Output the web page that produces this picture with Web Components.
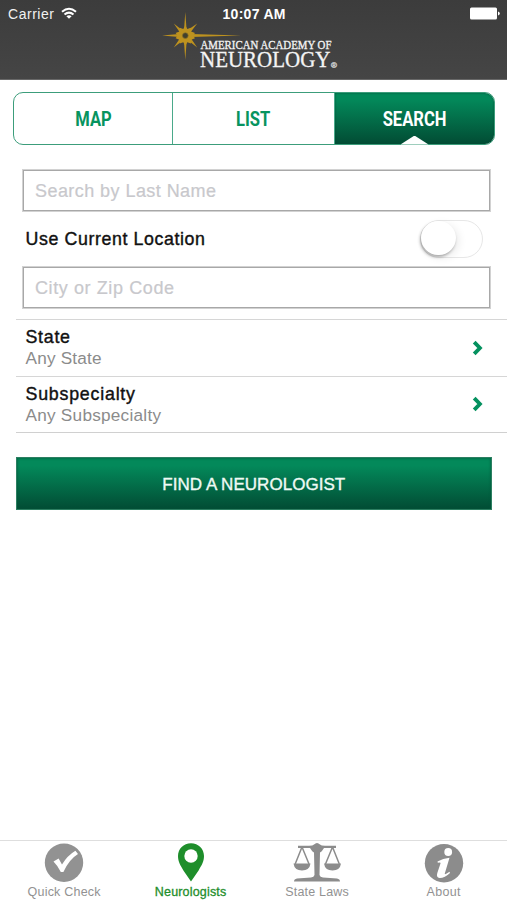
<!DOCTYPE html>
<html lang="en">
<head>
<meta charset="utf-8">
<title>Find a Neurologist</title>
<style>
html,body{margin:0;height:100%;background:#fff}
body{font-family:"Liberation Sans",Arial,sans-serif;overflow:hidden}
</style>
</head>
<body>
<neuro-app></neuro-app>
<script>
function define(name, html, setup) {
  const template = document.createElement('template');
  template.innerHTML = html;
  customElements.define(name, class extends HTMLElement {
    connectedCallback() {
      if (this.shadowRoot) return;
      this.attachShadow({mode: 'open'}).append(template.content.cloneNode(true));
      if (setup) setup(this, this.shadowRoot);
    }
  });
}

// A single line of text tracked out to the width given in its "w" attribute.
define('tracked-text', `<style>
:host{display:inline-block;white-space:nowrap}
span{display:inline-block}
</style><span></span>`, (el, root) => {
  const span = root.querySelector('span');
  const text = el.getAttribute('text');
  span.textContent = text;
  const natural = span.getBoundingClientRect().width;
  const gap = (Number(el.getAttribute('w')) - natural) / (text.length - 1);
  span.style.letterSpacing = gap + 'px';
  span.style.marginRight = -gap + 'px';
});

define('status-bar', `<style>
:host{display:grid;grid-template-columns:1fr auto 1fr;align-items:center;height:28px;padding:0 7px 0 8px;color:#f1f1f1;font-size:14px;line-height:28px}
.l{display:flex;align-items:center;gap:7px}
.r{display:flex;justify-content:flex-end;margin-top:-1px}
.l svg{margin-top:-2px}
.t{font-weight:bold;color:#fff}
svg{display:block}
</style>
<div class="l"><tracked-text text="Carrier" w="46"></tracked-text>
<svg width="16" height="13" viewBox="0 0 16 13" fill="none" stroke="#fff" stroke-width="2"><path d="M1 4.8Q8-1.4 15 4.8M3.5 7.6Q8 3.7 12.5 7.6"/><path d="M8 11.8L5.4 9.3Q8 7.2 10.6 9.3Z" fill="#fff" stroke="none"/></svg></div>
<tracked-text class="t" text="10:07 AM" w="63"></tracked-text>
<div class="r"><svg width="30" height="13" viewBox="0 0 30 13" fill="#fff"><rect x="0" y=".5" width="27" height="12" rx="1.5"/><path d="M28 4.6q1.8.3 1.8 1.9t-1.8 1.9z"/></svg></div>`);

define('academy-logo', `<style>
:host{display:block;width:180px;height:60px}
svg{display:block}
</style>
<svg width="180" height="60" viewBox="160 10 180 60">
<g fill="#bd921f">
<path d="M185.3 12l1.3 18h-2.6zM185.3 60l1.3-18h-2.6zM162 35.5l17-1.4v2.8zM241 35.5l-50-1.4v2.8z"/>
<path d="M173.8 23.4l9.4 7.6-2.6 2.6zM197.2 23.4l-7.6 10-3-2.6zM173.8 47.6l9.6-7.6-2.8-2.7zM197.2 47.6l-9.6-7.6 2.6-2.7z"/>
<path d="M185.3 25.5l2 3.5 3.6-1.2.2 3.6 3.9 1.6-2 2.6 2 2.7-3.8 1.5-.3 3.7-3.6-1.3-2 3.5-2-3.5-3.6 1.3-.3-3.7-3.8-1.5 2-2.7-2-2.6 3.9-1.6.2-3.6 3.6 1.2z"/>
</g>
<circle cx="185.3" cy="35.6" r="2.9" fill="#42402c" stroke="#8e7428" stroke-width=".7"/>
<g fill="#f4f4f4" stroke="#f4f4f4" font-family="Liberation Serif,serif">
<text x="200.5" y="48.8" font-size="11.5" stroke-width=".3" textLength="131" lengthAdjust="spacingAndGlyphs">AMERICAN ACADEMY OF</text>
<text x="200" y="66.5" font-size="22.5" stroke-width=".3" textLength="130.5" lengthAdjust="spacingAndGlyphs">NEUROLOGY</text>
</g>
<text x="331" y="67.6" font-size="8" fill="#ddd" stroke="#ccc" stroke-width=".4" font-family="Liberation Sans,sans-serif">®</text>
</svg>`);

define('app-header', `<style>
:host{display:block;height:79.5px;box-sizing:border-box;border-bottom:1px solid #686868;background:linear-gradient(#3c3c3c,#454545)}
academy-logo{margin:-18px 0 0 160px}
</style><status-bar></status-bar><academy-logo></academy-logo>`);

define('segment-tab', `<style>
:host{display:flex;align-items:center;justify-content:center;position:relative;box-sizing:border-box;color:#07945f;font:bold 19.5px Roboto,sans-serif;border-right:1px solid #4aa98a}
:host([selected]){color:#fff;border:0;background:linear-gradient(#03895a 12%,#024c34);box-shadow:inset 0 0 2px #044d35}
:host([selected])::after{content:"";position:absolute;bottom:-1px;left:calc(50% - 14px);width:28px;height:9px;background:#fff;clip-path:polygon(50% 0,100% 100%,0 100%)}
.x{transform:scaleX(.85);padding-top:2px}
</style><div class="x"><slot></slot></div>`);

define('segment-bar', `<style>
:host{display:grid;grid-template-columns:159px 162px 1fr;box-sizing:border-box;height:53px;margin:12px 12px 0 13px;border:1px solid #3c9d7b;border-radius:10px}
segment-tab:last-child{border-radius:0 9px 9px 0}
</style><segment-tab>MAP</segment-tab><segment-tab>LIST</segment-tab><segment-tab selected>SEARCH</segment-tab>`);

define('text-field', `<style>
:host{display:flex;align-items:center;box-sizing:border-box;height:41px;border:1px solid #a8a8a8;margin:0 17.5px 0 23px;padding:2px 0 0 11px;color:#c8c8cc;font-size:18px;background:#fff;outline:.5px solid #d2d2d2;-webkit-text-stroke:.2px #c8c8cc}
</style><slot></slot>`);

define('toggle-row', `<style>
:host{display:flex;align-items:center;justify-content:space-between;height:56px;padding:0 24.5px 0 25.5px;font-size:17.8px;color:#111;-webkit-text-stroke:.4px #111}
.l{padding-top:1px}
.s{box-sizing:border-box;width:62.5px;height:38px;border:1.8px solid #e7e7e7;border-radius:19px}
.k{width:34.5px;height:34.5px;border-radius:50%;background:#fff;box-shadow:-1px 2px 3px rgba(0,0,0,.3),3px 3px 9px rgba(0,0,0,.08)}
</style><div class="l"><slot></slot></div><div class="s"><div class="k"></div></div>`);

define('choice-row', `<style>
:host{display:flex;align-items:center;justify-content:space-between;box-sizing:border-box;height:56.5px;margin-left:15.5px;padding:0 24px 0 10px;border-top:1.5px solid #d6d6d6}
.c{display:flex;flex-direction:column;line-height:21px;font-size:17.8px;padding-top:1px}
.a{color:#111;-webkit-text-stroke:.4px #111}
.b{color:#8b8b8b;font-size:17.2px}
svg{display:block}
</style><div class="c"><div class="a"><slot name="title"></slot></div><div class="b"><slot></slot></div></div>
<svg width="11" height="16" viewBox="0 0 11 16" fill="none" stroke="#05915f" stroke-width="3.8"><path d="M2.2 2.2L7.9 8L2.2 13.8"/></svg>`);

define('action-button', `<style>
:host{display:flex;align-items:center;justify-content:center;box-sizing:border-box;height:53px;margin:24px 15px 0 15.5px;padding-top:3px;border:1px solid #2c7f61;background:linear-gradient(#03895a 15%,#024c34);box-shadow:inset 0 0 3px #03573b;color:#effaf4;font-size:17px;-webkit-text-stroke:.35px #effaf4}
</style><slot></slot>`);

define('bar-item', `<style>
:host{display:flex;flex-direction:column;align-items:center;color:#929292;font-size:12.5px}
:host([active]){color:#1e8e2b;-webkit-text-stroke:.3px #1e8e2b}
.i{height:44px;padding-top:1px;box-sizing:border-box}
.t{line-height:15px}
</style><div class="i"><slot name="icon"></slot></div><div class="t"><slot></slot></div>`);

define('bottom-bar', `<style>
:host{display:grid;grid-template-columns:repeat(4,126.5px);height:60px;box-sizing:border-box;padding-left:.8px;border-top:1.5px solid #dedede}
svg{display:block}
</style>
<bar-item><svg slot="icon" width="40" height="42" viewBox="0 0 40 42"><circle cx="20" cy="20.7" r="19.2" fill="#929292"/><path d="M9.5 19.5L14.6 16.5L18 22.5Q23.5 13.5 31.4 8.8L34 12Q25 17.5 19.4 30H16.8Q14 24 9.5 19.5Z" fill="#fff"/></svg><tracked-text text="Quick Check" w="73"></tracked-text></bar-item>
<bar-item active><svg slot="icon" width="28" height="42" viewBox="0 0 28 42"><path d="M14 1.2C6.5 1.2 1 6.8 1 14c0 5.5 2.5 9.5 5.4 14.4L14 39.5l7.6-11.1C24.5 23.5 27 19.5 27 14 27 6.8 21.5 1.2 14 1.2Z" fill="#1e8e2b"/><circle cx="14" cy="14" r="6.7" fill="#fff"/></svg><tracked-text text="Neurologists" w="71.5"></tracked-text></bar-item>
<bar-item><svg slot="icon" width="48" height="42" viewBox="0 0 48 42" fill="#8c8c8c"><path d="M5 3.8H16Q20 3.8 21 2.5Q24-.5 27 2.5Q28 3.8 32 3.8H43V6H31Q28.5 10 27 10.5L26.5 33Q27 35 30 35.5L44 36.5Q47 37 47 39.5H1Q1 37 4 36.5L18 35.5Q21 35 21.5 33L21 10.5Q19.5 10 17 6H5Z"/><path d="M9 5L2.2 22M9 5L16 22M39.5 5L32.5 22M39.5 5L46.3 22" fill="none" stroke="#8c8c8c" stroke-width="1.5"/><path d="M.5 21.5H17.5Q16.5 28.5 9 28.5T.5 21.5ZM31 21.5H48Q47 28.5 39.5 28.5T31 21.5Z"/></svg><tracked-text text="State Laws" w="63.5"></tracked-text></bar-item>
<bar-item><svg slot="icon" width="40" height="42" viewBox="0 0 40 42"><circle cx="20" cy="21.2" r="19.2" fill="#8c8c8c"/><circle cx="24.2" cy="10" r="3.9" fill="#fff"/><path d="M13.5 19.5Q19 16.5 25.5 15.7L20.8 31.5Q20.2 33.5 25.5 29.8L26 31Q20.5 36.2 15.5 36Q12 35.5 13.3 31L16.5 21.5Q17 19.7 13.8 20.8Z" fill="#fff"/></svg><tracked-text text="About" w="34"></tracked-text></bar-item>`);

define('neuro-app', `<style>
:host{display:flex;flex-direction:column;height:900px;width:507px;background:#fff}
main{flex:1}
text-field.first{margin-top:25px}
.rows{margin-top:11.5px}
.end{height:1px;background:#d0d0d0;margin-left:15.5px}
</style>
<app-header></app-header>
<main>
<segment-bar></segment-bar>
<text-field class="first"><tracked-text text="Search by Last Name" w="181"></tracked-text></text-field>
<toggle-row><tracked-text text="Use Current Location" w="179.5"></tracked-text></toggle-row>
<text-field><tracked-text text="City or Zip Code" w="139"></tracked-text></text-field>
<div class="rows">
<choice-row><tracked-text slot="title" text="State" w="44.5"></tracked-text><tracked-text text="Any State" w="76"></tracked-text></choice-row>
<choice-row><tracked-text slot="title" text="Subspecialty" w="109.5"></tracked-text><tracked-text text="Any Subspecialty" w="135.5"></tracked-text></choice-row>
<div class="end"></div>
</div>
<action-button><tracked-text text="FIND A NEUROLOGIST" w="183"></tracked-text></action-button>
</main>
<bottom-bar></bottom-bar>`);
</script>
</body>
</html>
